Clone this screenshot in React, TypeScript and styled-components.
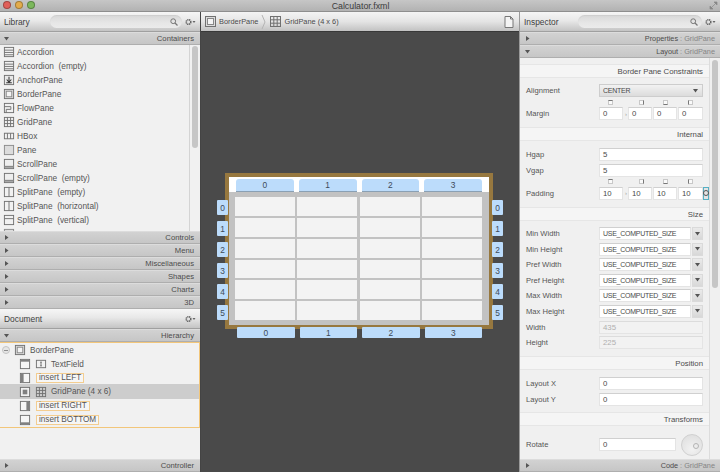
import React from "react";
import styled, { createGlobalStyle } from "styled-components";

const Global = createGlobalStyle`
  html, body { margin: 0; padding: 0; background: #4a4a4a; }
  body { font-family: "Liberation Sans", "DejaVu Sans", sans-serif; font-size: 8px; color: #484848; }
  * { box-sizing: border-box; }
`;

const Window = styled.div`
  width: 720px; height: 472px; display: flex; flex-direction: column; overflow: hidden; position: relative;
`;
const TitleBar = styled.div`
  height: 12px; flex: none; background: linear-gradient(#c6c6c6, #b2b2b2); border-bottom: 1px solid #8e8e8e;
  position: relative; display: flex; align-items: center; justify-content: center;
  font-size: 8.8px; color: #3c3c3c; line-height: 10px; padding-left: 1px;
`;
const Lights = styled.div`
  position: absolute; left: 3px; top: 1px; display: flex; gap: 4px;
`;
const Light = styled.span<{ $c: string }>`
  width: 8px; height: 8px; border-radius: 50%; background: ${p => p.$c}; border: 1px solid rgba(0,0,0,.28);
`;
const Resize = styled.svg`
  position: absolute; right: 2px; top: 1px;
`;
const Main = styled.div`
  flex: 1; display: flex; min-height: 0;
`;
const SidePanel = styled.div`
  width: 201px; flex: none; display: flex; flex-direction: column; background: #f1f1f1; border-right: 1px solid #444;
`;
const InspectorPanel = styled.div`
  width: 201px; flex: none; display: flex; flex-direction: column; background: #f0f0f0; position: relative; border-left: 1px solid #9a9a9a;
`;
const Center = styled.div`
  flex: 1; display: flex; flex-direction: column; min-width: 0; background: #4a4a4a;
`;
const Header = styled.div`
  height: 20px; flex: none; display: flex; align-items: center; padding: 0 4px 0 4px;
  background: linear-gradient(#f6f6f6, #e8e8e8 45%, #c4c4c4);
  font-size: 8.4px; color: #3e3e3e; border-bottom: 1px solid #a0a0a0;
`;
const HeaderTitle = styled.span<{ $w: number }>`
  width: ${p => p.$w}px; flex: none;
`;
const Search = styled.div`
  flex: 1; height: 13px; border-radius: 7px; display: flex; align-items: center; justify-content: flex-end; padding-right: 4px;
  background: linear-gradient(#d8d8d8, #e6e6e6 60%, #ebebeb); box-shadow: inset 0 1px 1px rgba(0,0,0,.05);
`;
const Gear = styled.span`
  flex: none; display: flex; align-items: center; margin-left: 3px;
`;
const SectionBar = styled.div`
  height: 13px; flex: none; display: flex; align-items: center; justify-content: space-between;
  padding: 0 6px 0 3px; background: linear-gradient(#d2d2d2, #c6c6c6); border-bottom: 1px solid #aeaeae; border-top: 1px solid #dcdcdc;
  font-size: 7.7px; color: #4c4c4c; white-space: pre;
`;
const InspectorBar = styled(SectionBar)`
  padding: 0 5px 0 4px; font-size: 7.3px;
`;
const Dim = styled.span`
  color: #858585;
`;
const Tri = styled.svg`
  flex: none;
`;
const LibraryArea = styled.div`
  height: 186px; flex: none; display: flex; overflow: hidden;
`;
const LibList = styled.div`
  width: 190px; flex: none; border-right: 1px solid #d4d4d4;
`;
const LibRow = styled.div`
  height: 14px; display: flex; align-items: center; gap: 2px; padding-left: 3px; white-space: pre; font-size: 8.3px; color: #555;
`;
const ScrollTrack = styled.div`
  flex: 1; padding: 1px 2px;
`;
const ScrollThumb = styled.div<{ $h: number }>`
  width: 6px; height: ${p => p.$h}px; border-radius: 3px; background: #c6c6c6;
`;
const Tree = styled.div`
  height: 86px; flex: none; border-style: solid; border-color: #f2c67a; border-width: 1px 1px 1px 0;
`;
const TreeRow = styled.div<{ $sel?: boolean; $h: number; $indent: number }>`
  height: ${p => p.$h}px; display: flex; align-items: center; gap: 4px; padding-left: ${p => p.$indent}px;
  background: ${p => (p.$sel ? "#cdcdcd" : "transparent")}; font-size: 8.2px; color: #555;
`;
const Collapse = styled.span`
  width: 8px; height: 8px; border: 1px solid #c4c4c4; border-radius: 50%; background: #e6e6e6; display: flex; align-items: center; justify-content: center;
  &::after { content: ""; width: 4px; height: 1px; background: #8e8e8e; }
`;
const Insert = styled.span`
  border: 1px solid #f3cd90; background: #f6f6f6; height: 10px; line-height: 8px; padding: 0 2px; margin-left: 1px;
`;
const TreeFill = styled.div`
  flex: 1;
`;
const Sep = styled.svg`
  flex: none; margin: 0 3px;
`;
const CrumbTitle = styled.span`
  font-size: 7.4px; color: #4a4a4a; margin-left: 2px;
`;
const Spacer = styled.span`
  flex: 1;
`;
const Crumbs = styled(Header)`
  background: linear-gradient(#f4f4f4, #e4e4e4 50%, #c2c2c2); border-bottom: 1px solid #383838; padding: 0 5px 0 3px;
`;
const Canvas = styled.div`
  flex: 1; display: flex; align-items: center; justify-content: center; padding: 0 2px 2px 0; background: #4a4a4a;
`;
const Pane = styled.div`
  width: 268px; height: 156px; position: relative; background: #97783f; padding: 4px;
  display: flex; flex-direction: column;
`;
const TopBand = styled.div`
  height: 15px; flex: none; background: #fff; padding: 2px 7px 0 7px;
`;
const TabCols = styled.div`
  display: grid; grid-template-columns: repeat(4, 1fr); column-gap: 5px;
`;
const GrayArea = styled.div`
  flex: 1; background: #c2c2c2; padding: 5px 7px 5px 6px;
`;
const Cells = styled.div`
  height: 123px; display: grid; grid-template-columns: repeat(4, 1fr); grid-template-rows: repeat(6, 1fr); gap: 2px 2.5px;
`;
const Cell = styled.div`
  background: #f3f3f3;
`;
const Tab = styled.div<{ $top?: boolean }>`
  background: #bcdcfb; color: #3c4a58; font-size: 8.4px; display: flex; align-items: center; justify-content: center;
  border-radius: ${p => (p.$top ? "3px 3px 0 0" : "1px")};
  border-bottom: ${p => (p.$top ? "1px solid #8aa0b4" : "none")};
  height: ${p => (p.$top ? "13px" : "auto")};
`;
const SideRail = styled.div<{ $side: "left" | "right" }>`
  position: absolute; top: 27px; width: 11px; height: 120px; display: grid; grid-template-rows: repeat(6, 1fr); row-gap: 6px;
  ${p => (p.$side === "left" ? "left: -8px;" : "right: -10px;")}
`;
const BottomRail = styled.div`
  position: absolute; left: 12px; top: 154px; width: 245px; height: 11px; display: grid; grid-template-columns: repeat(4, 1fr); column-gap: 5px;
`;
const Form = styled.div`
  flex: 1; width: 190px; padding-top: 6px; overflow: hidden; border-right: 1px solid #dcdcdc;
`;
const Band = styled.div`
  height: 14px; display: flex; align-items: center; justify-content: flex-end; padding-right: 6px;
  border-top: 1px solid #e6e6e6; border-bottom: 1px solid #e6e6e6; background: #f5f5f5; font-size: 7.8px; color: #4c4c4c;
`;
const Block = styled.div<{ $t: number; $b: number; $gap: number }>`
  padding: ${p => p.$t}px 6px ${p => p.$b}px 6px; display: flex; flex-direction: column; gap: ${p => p.$gap}px;
`;
const Row = styled.div`
  height: 13px; display: flex; align-items: center; font-size: 7.6px; color: #555; position: relative;
`;
const Label = styled.span`
  width: 73px; flex: none;
`;
const Field = styled.div<{ $off?: boolean; $w?: number }>`
  flex: ${p => (p.$w ? "none" : "1")}; width: ${p => (p.$w ? `${p.$w}px` : "auto")}; height: 13px; background: ${p => (p.$off ? "#f2f2f2" : "#fff")};
  color: ${p => (p.$off ? "#b0b0b0" : "#4a4a4a")}; border: 1px solid ${p => (p.$off ? "#e4e4e4" : "#e4e4e4")}; border-top-color: ${p => (p.$off ? "#dcdcdc" : "#d0d0d0")};
  display: flex; align-items: center; padding-left: 3px; font-size: 7.8px; line-height: 11px; min-width: 0; white-space: nowrap;
`;
const SizeText = styled.span`
  font-size: 7px; letter-spacing: -.27px;
`;
const DropBtn = styled.div`
  width: 11px; flex: none; height: 13px; margin-left: 1px; background: linear-gradient(#eaeaea, #d8d8d8); border: 1px solid #dadada; display: flex; align-items: center; justify-content: center;
`;
const Select = styled.div`
  flex: 1; height: 13px; background: linear-gradient(#f2f2f2, #dcdcdc); border: 1px solid #cdcdcd; display: flex; align-items: center; justify-content: space-between; padding: 0 4px 0 3px; font-size: 7px; letter-spacing: -.25px; color: #4a4a4a;
`;
const MarkerRow = styled.div`
  height: 5px; padding-left: 82px; display: grid; grid-template-columns: 31px 24px 25px 5px; justify-items: start;
`;
const MarkerWrap = styled.span`
  display: block; line-height: 0;
`;
const Linked = styled.span`
  width: 4px; flex: none; text-align: center; color: #a0a0a0; font-size: 6px;
`;
const Quad = styled.div`
  width: 24px; flex: none; height: 13px; background: #fff; border: 1px solid #e4e4e4; border-top-color: #d0d0d0; display: flex; align-items: center; padding-left: 3px; margin-right: 1px; font-size: 7.8px; color: #4a4a4a;
`;
const Last = styled(Quad)`
  width: 25px; margin-right: 0;
`;
const PadBtn = styled.div`
  position: absolute; left: 177px; top: 0; width: 6px; height: 13px; border: 1px solid #56b0c4; background: #e4e4e4; display: flex; align-items: center; justify-content: center;
  &::after { content: ""; flex: none; width: 4px; height: 4px; border-radius: 50%; border: 1px solid #555; }
`;
const Knob = styled.div`
  width: 22px; height: 22px; border-radius: 50%; flex: none; margin-left: 5px; background: radial-gradient(circle at 50% 70%, #f2f2f2, #dcdcdc); border: 1px solid #d0d0d0; position: relative;
  &::after { content: ""; position: absolute; right: 3px; top: 8px; width: 4px; height: 4px; border-radius: 50%; border: 1px solid #b4b4b4; }
`;
const InspectorScroll = styled.div`
  position: absolute; left: 192px; top: 48px; width: 6px; height: 228px; border-radius: 3px; background: #c6c6c6;
`;

type IconKind = "accordion" | "anchor" | "border" | "flow" | "grid" | "hbox" | "pane" | "scroll" | "splitV" | "splitH" | "field"
  | "slotTop" | "slotLeft" | "slotCenter" | "slotRight" | "slotBottom";

function Ico({ k, s = 12 }: { k: IconKind; s?: number }) {
  const st = { fill: "none", stroke: "#707070", strokeWidth: 1 } as const;
  const body: Record<IconKind, React.ReactNode> = {
    accordion: <><rect x="1.5" y="1.5" width="10" height="10" {...st} /><path d="M1.500 4.500h10M1.500 7h10M1.500 9.500h10" {...st} /></>,
    anchor: <><rect x="1.5" y="1.5" width="10" height="10" fill="#e8e8e8" stroke="#707070" /><path d="M6.500 3v6M4 6l2.500 3L9 6M3.500 9.500h6" stroke="#333" strokeWidth="1.100" fill="none" /></>,
    border: <><rect x="1.5" y="1.5" width="10" height="10" fill="#dcdcdc" stroke="#707070" /><rect x="3.5" y="3.5" width="6" height="6" fill="#f4f4f4" stroke="#888" /></>,
    flow: <><rect x="1.5" y="1.5" width="10" height="10" {...st} /><path d="M1.500 5h7v3h-5v3.500M11.500 5v3" {...st} /></>,
    grid: <><rect x="1.5" y="1.5" width="10" height="10" {...st} /><path d="M4.800 1.500v10M8.200 1.500v10M1.500 4.800h10M1.500 8.200h10" {...st} /></>,
    hbox: <><rect x="1.5" y="3.5" width="10" height="6" {...st} /><path d="M4.800 3.500v6M8.200 3.500v6" {...st} /></>,
    pane: <><rect x="1.5" y="1.5" width="10" height="10" fill="#dcdcdc" stroke="#8a8a8a" /></>,
    scroll: <><rect x="1.5" y="1.5" width="10" height="10" fill="#eee" stroke="#707070" /><path d="M1.500 9.500h10" stroke="#888" strokeWidth="2" /></>,
    splitV: <><rect x="1.5" y="1.5" width="10" height="10" {...st} /><path d="M6.500 1.500v10" {...st} /></>,
    splitH: <><rect x="1.5" y="1.5" width="10" height="10" {...st} /><path d="M1.500 5h10" {...st} /></>,
    field: <><rect x="1.5" y="2.5" width="10" height="8" {...st} /><path d="M5.500 4.500h2M6.500 4.500v4M5.500 8.500h2" {...st} /></>,
    slotTop: <><rect x="1.5" y="1.5" width="10" height="10" fill="#f6f6f6" stroke="#707070" /><rect x="2" y="2" width="9" height="2" fill="#808080" /></>,
    slotLeft: <><rect x="1.5" y="1.5" width="10" height="10" fill="#f6f6f6" stroke="#707070" /><rect x="2" y="2" width="3" height="9" fill="#808080" /></>,
    slotCenter: <><rect x="1.5" y="1.5" width="10" height="10" fill="#f0f0f0" stroke="#707070" /><rect x="4" y="4" width="5" height="5" fill="#808080" /></>,
    slotRight: <><rect x="1.5" y="1.5" width="10" height="10" fill="#f6f6f6" stroke="#707070" /><rect x="8" y="2" width="3" height="9" fill="#808080" /></>,
    slotBottom: <><rect x="1.5" y="1.5" width="10" height="10" fill="#f6f6f6" stroke="#707070" /><rect x="2" y="9" width="9" height="2" fill="#808080" /></>,
  };
  return <svg width={s} height={s} viewBox="0 0 13 13" style={{ flex: "none" }}>{body[k]}</svg>;
}

const TriDown = () => <Tri width="7" height="7" viewBox="0 0 7 7"><path d="M1 2h5L3.500 5.500z" fill="#555" /></Tri>;
const TriRight = () => <Tri width="7" height="7" viewBox="0 0 7 7"><path d="M2 1v5l3.500-2.500z" fill="#555" /></Tri>;

const GearIcon = () => (
  <Gear>
    <svg width="11" height="8" viewBox="0 0 11 8">
      <circle cx="3.500" cy="4" r="2.300" fill="none" stroke="#666" strokeWidth="1.600" strokeDasharray="1.200 .5" />
      <path d="M7.500 3h3L9 5z" fill="#666" />
    </svg>
  </Gear>
);
const SearchIcon = () => (
  <svg width="8" height="8" viewBox="0 0 8 8"><circle cx="3.200" cy="3.200" r="2.400" fill="none" stroke="#777" /><path d="M5 5l2.500 2.500" stroke="#777" strokeWidth="1.200" /></svg>
);
const MarginMark = ({ side }: { side: "t" | "r" | "b" | "l" }) => {
  const d = { t: "M.5 .5h4", r: "M4.500 .5v4", b: "M.5 4.500h4", l: "M.5 .5v4" }[side];
  return (
    <MarkerWrap>
      <svg width="5" height="5" viewBox="0 0 5 5"><rect x=".5" y=".5" width="4" height="4" fill="#fafafa" stroke="#c8c8c8" /><path d={d} stroke="#777" /></svg>
    </MarkerWrap>
  );
};
const Markers = () => (
  <MarkerRow><MarginMark side="t" /><MarginMark side="r" /><MarginMark side="b" /><MarginMark side="l" /></MarkerRow>
);
const TriDownSmall = () => <svg width="5" height="4" viewBox="0 0 5 4"><path d="M0 0h5L2.500 3.500z" fill="#555" /></svg>;
const QuadRow = ({ label, v, btn }: { label: string; v: string; btn?: boolean }) => (
  <Row>
    <Label>{label}</Label>
    <Quad>{v}</Quad><Linked>›</Linked><Quad>{v}</Quad><Quad>{v}</Quad><Last>{v}</Last>
    {btn && <PadBtn />}
  </Row>
);
const SizeRow = ({ label }: { label: string }) => (
  <Row><Label>{label}</Label><Field><SizeText>USE_COMPUTED_SIZE</SizeText></Field>
    <DropBtn><TriDownSmall /></DropBtn></Row>
);

const lib: [IconKind, string][] = [
  ["accordion", "Accordion"], ["accordion", "Accordion  (empty)"], ["anchor", "AnchorPane"], ["border", "BorderPane"],
  ["flow", "FlowPane"], ["grid", "GridPane"], ["hbox", "HBox"], ["pane", "Pane"], ["scroll", "ScrollPane"], ["scroll", "ScrollPane  (empty)"],
  ["splitV", "SplitPane  (empty)"], ["splitV", "SplitPane  (horizontal)"], ["splitH", "SplitPane  (vertical)"], ["pane", " "],
];

export default function App() {
  return (
    <Window>
      <Global />
      <TitleBar>
        <Lights><Light $c="#e0605a" /><Light $c="#e3ac4c" /><Light $c="#7cb85c" /></Lights>
        Calculator.fxml
        <Resize width="9" height="9" viewBox="0 0 9 9"><path d="M5 1h3v3zM1 5v3h3zM7 2L2 7" fill="#888" stroke="#888" strokeWidth=".7" /></Resize>
      </TitleBar>
      <Main>
        <SidePanel>
          <Header><HeaderTitle $w={46}>Library</HeaderTitle><Search><SearchIcon /></Search><GearIcon /></Header>
          <SectionBar><TriDown />Containers</SectionBar>
          <LibraryArea>
            <LibList>
              {lib.map(([k, t], i) => <LibRow key={i}><Ico k={k} />{t}</LibRow>)}
            </LibList>
            <ScrollTrack><ScrollThumb $h={102} /></ScrollTrack>
          </LibraryArea>
          {["Controls", "Menu", "Miscellaneous", "Shapes", "Charts", "3D"].map(t => (
            <SectionBar key={t}><TriRight />{t}</SectionBar>
          ))}
          <Header><HeaderTitle $w={0}>Document</HeaderTitle><Spacer /><GearIcon /></Header>
          <SectionBar><TriDown />Hierarchy</SectionBar>
          <Tree>
            <TreeRow $h={14} $indent={2}><Collapse /><Ico k="border" /><span>BorderPane</span></TreeRow>
            <TreeRow $h={14} $indent={19}><Ico k="slotTop" /><Ico k="field" /><span>TextField</span></TreeRow>
            <TreeRow $h={13} $indent={19}><Ico k="slotLeft" /><Insert>insert LEFT</Insert></TreeRow>
            <TreeRow $h={15} $sel $indent={19}><Ico k="slotCenter" /><Ico k="grid" /><span>GridPane (4 x 6)</span></TreeRow>
            <TreeRow $h={14} $indent={19}><Ico k="slotRight" /><Insert>insert RIGHT</Insert></TreeRow>
            <TreeRow $h={14} $indent={19}><Ico k="slotBottom" /><Insert>insert BOTTOM</Insert></TreeRow>
          </Tree>
          <TreeFill />
          <SectionBar><TriRight />Controller</SectionBar>
        </SidePanel>
        <Center>
          <Crumbs>
            <Ico k="border" s={13} />
            <CrumbTitle>BorderPane</CrumbTitle>
            <Sep width="5" height="14" viewBox="0 0 5 14"><path d="M1 0l3 7-3 7" fill="none" stroke="#b4b4b4" /></Sep>
            <Ico k="grid" s={13} />
            <CrumbTitle>GridPane (4 x 6)</CrumbTitle>
            <Spacer />
            <svg width="10" height="12" viewBox="0 0 10 12"><path d="M1 .5h5.500L9 3v8.500H1z" fill="#f4f4f4" stroke="#777" /><path d="M6.500 .5V3H9" fill="none" stroke="#777" /></svg>
          </Crumbs>
          <Canvas>
            <Pane>
              <TopBand>
                <TabCols>{[0, 1, 2, 3].map(n => <Tab $top key={n}>{n}</Tab>)}</TabCols>
              </TopBand>
              <GrayArea>
                <Cells>{Array.from({ length: 24 }, (_, i) => <Cell key={i} />)}</Cells>
              </GrayArea>
              <SideRail $side="left">{[0, 1, 2, 3, 4, 5].map(n => <Tab key={n}>{n}</Tab>)}</SideRail>
              <SideRail $side="right">{[0, 1, 2, 3, 4, 5].map(n => <Tab key={n}>{n}</Tab>)}</SideRail>
              <BottomRail>{[0, 1, 2, 3].map(n => <Tab key={n}>{n}</Tab>)}</BottomRail>
            </Pane>
          </Canvas>
        </Center>
        <InspectorPanel>
          <Header><HeaderTitle $w={54}>Inspector</HeaderTitle><Search><SearchIcon /></Search><GearIcon /></Header>
          <InspectorBar><TriRight /><span>Properties <Dim>: GridPane</Dim></span></InspectorBar>
          <InspectorBar><TriDown /><span>Layout <Dim>: GridPane</Dim></span></InspectorBar>
          <Form>
            <Band>Border Pane Constraints</Band>
            <Block $t={6} $b={7} $gap={2.5}>
              <Row><Label>Alignment</Label><Select>CENTER<TriDownSmall /></Select></Row>
              <Markers />
              <QuadRow label="Margin" v="0" />
            </Block>
            <Band>Internal</Band>
            <Block $t={7} $b={7.5} $gap={2.5}>
              <Row><Label>Hgap</Label><Field>5</Field></Row>
              <Row><Label>Vgap</Label><Field>5</Field></Row>
              <Markers />
              <QuadRow label="Padding" v="10" btn />
            </Block>
            <Band>Size</Band>
            <Block $t={6} $b={7} $gap={2.6}>
              {["Min Width", "Min Height", "Pref Width", "Pref Height", "Max Width", "Max Height"].map(l => <SizeRow key={l} label={l} />)}
              <Row><Label>Width</Label><Field $off>435</Field></Row>
              <Row><Label>Height</Label><Field $off>225</Field></Row>
            </Block>
            <Band>Position</Band>
            <Block $t={7} $b={6.4} $gap={2.6}>
              <Row><Label>Layout X</Label><Field>0</Field></Row>
              <Row><Label>Layout Y</Label><Field>0</Field></Row>
            </Block>
            <Band>Transforms</Band>
            <Block $t={12} $b={0} $gap={0}>
              <Row><Label>Rotate</Label><Field $w={77}>0</Field><Knob /></Row>
            </Block>
          </Form>
          <InspectorBar><TriRight /><span>Code <Dim>: GridPane</Dim></span></InspectorBar>
          <InspectorScroll />
        </InspectorPanel>
      </Main>
    </Window>
  );
}
